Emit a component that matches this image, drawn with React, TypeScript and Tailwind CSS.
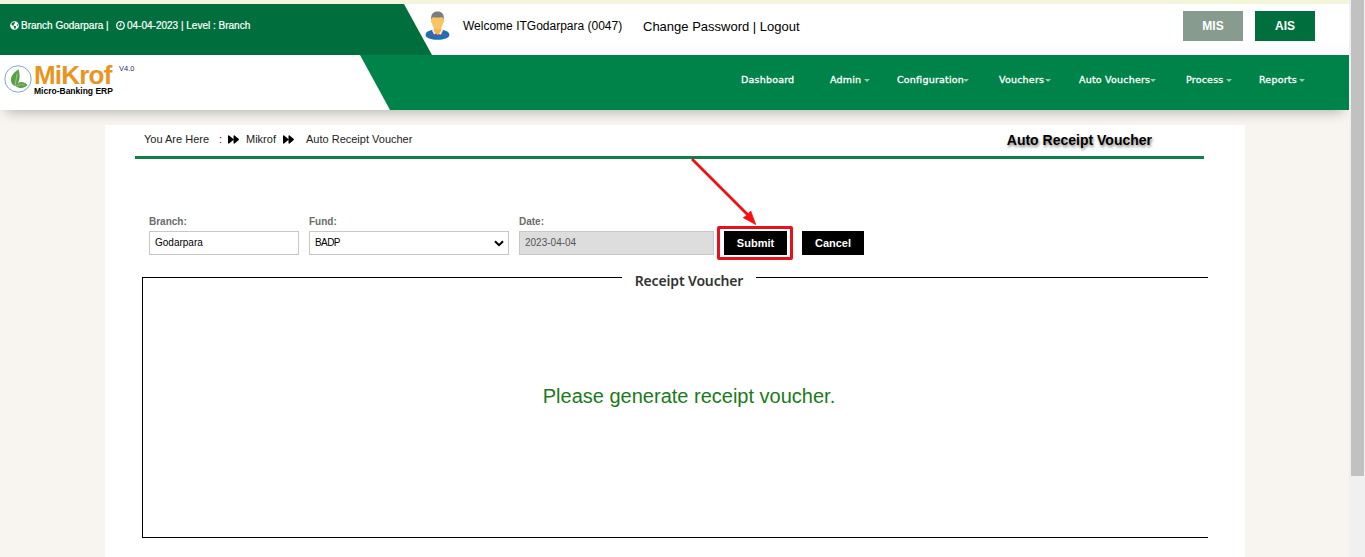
import { FaGlobeAmericas, FaForward } from "react-icons/fa";

const NAV = [
  { label: "Dashboard", cell: "w-[89px]", text: "w-[54px]", gap: "", caret: false },
  { label: "Admin", cell: "w-[67px]", text: "w-[32px]", gap: "ml-[2px]", caret: true },
  { label: "Configuration", cell: "w-[102px]", text: "w-[67px]", gap: "-ml-[1px]", caret: true },
  { label: "Vouchers", cell: "w-[80px]", text: "w-[46px]", gap: "", caret: true },
  { label: "Auto Vouchers", cell: "w-[107px]", text: "w-[72px]", gap: "-ml-[1px]", caret: true },
  { label: "Process", cell: "w-[73px]", text: "w-[38px]", gap: "ml-[2px]", caret: true },
  { label: "Reports", cell: "w-[90px]", text: "w-[38px]", gap: "ml-[2px]", caret: true },
];

function Leaf() {
  return (
    <svg className="h-[28px] w-[28px] shrink-0" viewBox="0 0 28 28">
      <circle cx="14" cy="14" r="13.2" fill="#fff" stroke="#6f9fc4" strokeWidth="0.9" />
      <path d="M14.500 4.200C9 8 6.500 11.500 7 16c.4 2.500 1.800 4.300 4.200 5.200C15 18 17 12.500 14.500 4.200z" fill="#54a243" />
      <path d="M13.200 8.500 11 20.500" stroke="#b9dbb0" strokeWidth="0.7" fill="none" />
      <path d="M11.800 21.200c1-4 6.700-6.400 11.800-1.200-3 3.400-8.300 4-11.800 1.200z" fill="#54a243" />
      <path d="M13 20.900c3-1.400 5.600-1.500 8-.8" stroke="#b9dbb0" strokeWidth="0.6" fill="none" />
    </svg>
  );
}

function Clock() {
  return (
    <svg className="mt-[3px] h-[9px] w-[9px]" viewBox="0 0 9 9" fill="none" stroke="#fff">
      <circle cx="4.500" cy="4.500" r="3.800" strokeWidth="1.300" />
      <path d="M4.800 2.200v2.700H2.800" strokeWidth="1" />
    </svg>
  );
}

function Avatar() {
  return (
    <svg className="h-[29px] w-[25px] shrink-0" viewBox="0 0 25 29">
      <path d="M.6 24C.6 21 3.500 19.600 8.500 18.500h8c5 1.100 7.900 2.500 7.900 5.500 0 2.700-5.400 4.800-11.900 4.800S.6 26.700.6 24z" fill="#1b70b8" />
      <path d="M7 19.300 9 17.500h7l2 1.800-2 4.200H9z" fill="#f4f7fa" />
      <path d="M8.800 14h7.400v5.500c-1 2.500-2 3.800-3.700 3.800s-2.700-1.300-3.700-3.800z" fill="#f2b64e" />
      <path d="M6.500 8.500C6.500 3.500 9 3 12.500 3s6 .5 6 5.500c1.200.8.800 3-.3 3.300-.7 3.900-2.700 6.500-5.700 6.500s-5-2.600-5.700-6.500c-1.100-.3-1.500-2.500-.3-3.300z" fill="#f9c462" />
      <path d="M6.300 8.500C5.500 3 8.500.5 12.600.5S19.500 3 18.700 8.500c-.8-.8-1-1.500-1.500-2.500-3 .8-6.400.8-9.400 0-.5 1-.7 1.700-1.500 2.500z" fill="#7d7d7f" />
      <path d="M5.500 23.700h3M9.500 23.300h2.500M13 24h2M16.500 23.500h3.500" stroke="#b93a52" strokeWidth="1.200" />
    </svg>
  );
}

function Header() {
  return (
    <header className="shadow-[0_8px_12px_-6px_rgba(0,0,0,0.28)]">
      <div className="h-1 bg-[#f5f5dc]" />
      <div className="flex h-[51px] bg-gradient-to-b from-white from-70% to-[#fafafa]">
        <div className="flex h-[51px] w-[432px] shrink-0 items-start bg-[#006f3d] pl-[10px] pt-[14px] text-[10px] leading-4 text-white [-webkit-text-stroke:0.2px_white] [clip-path:polygon(0_0,404px_0,432px_100%,0_100%)]">
          <FaGlobeAmericas className="mt-[3px] h-[9px] w-[9px]" />
          <span className="ml-[2px] w-[95px] whitespace-nowrap">Branch Godarpara |</span>
          <Clock />
          <span className="ml-[2px] whitespace-nowrap">04-04-2023 | Level : Branch</span>
        </div>
        <div className="-ml-[7px] flex items-start pt-[7px]">
          <Avatar />
        </div>
        <span className="ml-[13px] mt-[14px] w-[180px] whitespace-nowrap text-[12px] leading-4 text-black">Welcome ITGodarpara (0047)</span>
        <span className="mt-[13px] whitespace-nowrap text-[13px] leading-5 text-black">Change Password | Logout</span>
        <div className="ml-auto mr-[34px] mt-[7px] flex gap-3">
          <button className="h-[30px] w-[60px] bg-[#879c8f] text-[12px] font-bold text-white">MIS</button>
          <button className="h-[30px] w-[60px] bg-[#006f3d] text-[12px] font-bold text-white">AIS</button>
        </div>
      </div>
      <div className="flex h-[55px] bg-[#008348]">
        <div className="flex h-[55px] w-[390px] items-start bg-white pl-1 pt-[10px] [clip-path:polygon(0_0,360px_0,390px_100%,0_100%)]">
          <Leaf />
          <div className="ml-[2px] w-[85px] whitespace-nowrap">
            <div className="text-[26px] font-bold leading-[21px] tracking-[-0.8px] text-[#e8951f]">MiKrof</div>
            <div className="text-[8.500px] font-bold leading-[10px] text-black">Micro-Banking ERP</div>
          </div>
          <span className="text-[7.500px] leading-2 text-[#29296e]">V4.0</span>
        </div>
        <nav className="ml-auto flex items-start pt-[17px] font-['DejaVu_Sans',sans-serif] text-[9.500px] leading-4 tracking-[0.2px] text-white [-webkit-text-stroke:0.3px_white]">
          {NAV.map((n) => (
            <a key={n.label} className={`flex items-center whitespace-nowrap ${n.cell}`}>
              <span className={n.text}>{n.label}</span>
              {n.caret && (
                <span className={`mt-[1px] border-x-[3px] border-t-[3px] border-x-transparent border-t-[#8fd0ae] ${n.gap}`} />
              )}
            </a>
          ))}
        </nav>
      </div>
    </header>
  );
}

function Filters() {
  return (
    <div className="ml-[14px] mt-[55px] flex h-[42px] text-[10px]">
      <label className="w-[160px] font-bold leading-4 text-[#6b6b6b]">
        Branch:
        <span className="mt-[1px] flex h-6 w-[150px] items-center border border-[#c8c8c8] pl-[5px] font-normal text-black">Godarpara</span>
      </label>
      <label className="w-[210px] font-bold leading-4 text-[#6b6b6b]">
        Fund:
        <span className="mt-[1px] flex h-6 w-[200px] items-center justify-between border border-[#c8c8c8] pl-[5px] pr-[4px] font-normal tracking-[-0.6px] text-black">
          BADP
          <svg className="h-[7px] w-[10px]" viewBox="0 0 10 7">
            <path d="M1 1.200 5 5.200 9 1.200" fill="none" stroke="#000" strokeWidth="2" />
          </svg>
        </span>
      </label>
      <label className="w-[205px] font-bold leading-4 text-[#6b6b6b]">
        Date:
        <span className="mt-[1px] flex h-6 w-[195px] items-center border border-[#c8c8c8] bg-[#dddddd] pl-[5px] font-normal text-[#555]">2023-04-04</span>
      </label>
      <div className="relative mt-[17px] h-6">
        <button className="h-6 w-[63px] bg-black text-[11px] font-bold text-white">Submit</button>
        <span className="absolute -left-[7px] -top-[5px] h-[34px] w-[76px] rounded-[2px] border-[3px] border-[#e8101a]" />
        <svg className="absolute -left-[34px] -top-[74px] h-[70px] w-[70px]" viewBox="0 0 70 70">
          <path d="M2 2 58 58" stroke="#ee1111" strokeWidth="2.800" />
          <path d="M65.700 67.500 53.300 60.700 56.500 58.500 60.700 54z" fill="#ff0d0d" stroke="#ee1111" strokeWidth="0.8" />
        </svg>
      </div>
      <button className="ml-[15px] mt-[17px] h-6 w-[62px] bg-black text-[11px] font-bold text-white">Cancel</button>
    </div>
  );
}

function Voucher() {
  return (
    <section className="ml-[7px] mt-[21px] w-[1066px]">
      <div className="flex h-4 items-start">
        <span className="h-4 w-[480px] border-l border-t border-black" />
        <h2 className="-mt-[4px] w-[134px] whitespace-nowrap text-center font-['Noto_Sans',sans-serif] text-[14px] font-semibold leading-4 tracking-[-0.15px] text-[#333]">
          Receipt Voucher
        </h2>
        <span className="h-4 flex-1 border-t border-black" />
      </div>
      <p className="h-[245px] border-b border-l border-black pl-[27px] pt-[88px] text-center text-[20px] leading-[30px] text-[#1a7a1a]">
        Please generate receipt voucher.
      </p>
    </section>
  );
}

export default function App() {
  return (
    <div className="flex h-[557px] w-[1365px] overflow-hidden bg-[#f8f5f0] font-['Liberation_Sans',Arial,sans-serif]">
      <div className="w-[1349px]">
        <Header />
        <main className="ml-[105px] mt-[15px] h-[432px] w-[1140px] bg-white pl-[30px]">
          <div className="flex h-[34px] w-[1069px] items-start border-b-[3px] border-[#0f7f4c] pl-[9px] pt-[6px] text-[11px] leading-4 text-[#222]">
            <span className="w-[75px]">You Are Here</span>
            <span className="w-[9px]">:</span>
            <FaForward className="mt-[3px] h-[11px] w-[11px] text-black" />
            <span className="ml-[7px] w-[37px]">Mikrof</span>
            <FaForward className="mt-[3px] h-[11px] w-[11px] text-black" />
            <span className="ml-[12px]">Auto Receipt Voucher</span>
            <h1 className="ml-auto mr-[52px] text-[14px] font-bold leading-[18px] text-black [text-shadow:1px_2px_3px_rgba(0,0,0,0.5)]">Auto Receipt Voucher</h1>
          </div>
          <Filters />
          <Voucher />
        </main>
      </div>
      <div className="h-full w-4 bg-[#f0f0f0] pl-[2px]">
        <div className="h-[476px] w-[13px] bg-[#c1c1c1]" />
      </div>
    </div>
  );
}
